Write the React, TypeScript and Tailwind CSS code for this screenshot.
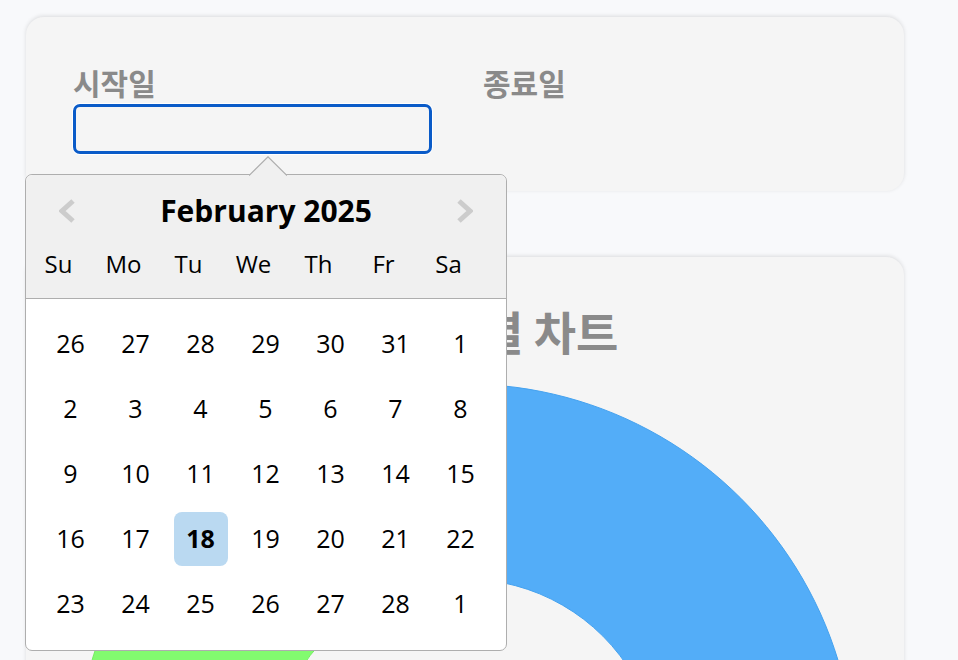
import React from 'react';

const dayNames = ['Su', 'Mo', 'Tu', 'We', 'Th', 'Fr', 'Sa'];

const weeks = [
  [26, 27, 28, 29, 30, 31, 1],
  [2, 3, 4, 5, 6, 7, 8],
  [9, 10, 11, 12, 13, 14, 15],
  [16, 17, 18, 19, 20, 21, 22],
  [23, 24, 25, 26, 27, 28, 1],
];

const slices = [
  { from: -90, to: 150, fill: '#53adf8', stroke: '#45a2ef' },
  { from: 150, to: 240, fill: '#82fb6f', stroke: '#74ee62' },
  { from: 240, to: 270, fill: '#ff7b8f', stroke: '#f26a80' },
];

function arc(cx: number, cy: number, R: number, r: number, a0: number, a1: number) {
  const rad = (d: number) => (d * Math.PI) / 180;
  const p = (rr: number, a: number) => [cx + rr * Math.cos(rad(a)), cy + rr * Math.sin(rad(a))];
  const large = a1 - a0 > 180 ? 1 : 0;
  const [x0, y0] = p(R, a0);
  const [x1, y1] = p(R, a1);
  const [x2, y2] = p(r, a1);
  const [x3, y3] = p(r, a0);
  return `M${x0} ${y0} A${R} ${R} 0 ${large} 1 ${x1} ${y1} L${x2} ${y2} A${r} ${r} 0 ${large} 0 ${x3} ${y3} Z`;
}

function DatePopup() {
  return (
    <div
      className="absolute left-[-48px] top-[110px] z-10 w-[482px] h-[477px] rounded-[7px] border border-[#aeaeae] bg-white"
      style={{ fontFamily: '"Open Sans", "Noto Sans", sans-serif' }}
    >
      {/* triangle */}
      <svg className="absolute left-[223px] top-[-19px]" width="38" height="20" viewBox="0 0 38 20">
        <path d="M0 19.5 L19 0.8 L38 19.5" fill="#f0f0f0" stroke="#aeaeae" strokeWidth="1.2" />
      </svg>
      <div className="bg-[#f0f0f0] border-b border-[#aeaeae] rounded-t-[7px] pt-[18px] pb-[12px]">
        <div className="flex items-center justify-between px-[33px] h-[36px]">
          <svg width="16" height="24" viewBox="0 0 16 24">
            <polyline points="14,2 3,12 14,22" fill="none" stroke="#cccccc" strokeWidth="5" />
          </svg>
          <div className="text-[30px] font-bold text-black leading-[36px]">February 2025</div>
          <svg width="16" height="24" viewBox="0 0 16 24">
            <polyline points="2,2 13,12 2,22" fill="none" stroke="#cccccc" strokeWidth="5" />
          </svg>
        </div>
        <div className="flex mt-[13px] h-[44px] items-center">
          {dayNames.map((d) => (
            <div key={d} className="w-[65px] text-center text-[24px] text-black">
              {d}
            </div>
          ))}
        </div>
      </div>
      <div className="pt-[12px] pl-[12px]">
        {weeks.map((w, i) => (
          <div key={i} className="flex h-[65px]">
            {w.map((n, j) => {
              const sel = i === 3 && j === 2;
              return (
                <div key={j} className="w-[65px] flex items-center justify-center">
                  <div
                    className={`w-[54px] h-[54px] flex items-center justify-center rounded-[8px] text-[25px] text-black ${
                      sel ? 'bg-[#bad9f1] font-bold' : ''
                    }`}
                  >
                    {n}
                  </div>
                </div>
              );
            })}
          </div>
        ))}
      </div>
    </div>
  );
}

export default function App() {
  const korean = { fontFamily: '"Noto Sans CJK KR", "Noto Sans", sans-serif' };
  return (
    <div className="h-[660px] overflow-hidden bg-[#f8f9fb] pl-[26px] pt-[17px]">
      <div className="relative w-[878px] h-[174px] rounded-[18px] bg-[#f5f5f5] shadow-[0_-1px_4px_rgba(0,0,0,0.12)] px-[47px] pt-[47px]">
        <div className="flex gap-[51px]">
          <div className="relative w-[359px]">
            <div className="text-[30px] font-bold text-[#8a8a8a] leading-[36px]" style={korean}>
              시작일
            </div>
            <div className="mt-[4px] h-[50px] rounded-[7px] border-[3px] border-[#0a5bc8] bg-[#f5f5f5] ring-1 ring-white" />
            <DatePopup />
          </div>
          <div className="w-[359px]">
            <div className="text-[30px] font-bold text-[#8a8a8a] leading-[36px]" style={korean}>
              종료일
            </div>
          </div>
        </div>
      </div>
      <div className="mt-[66px] w-[878px] h-[900px] rounded-[18px] bg-[#f5f5f5] shadow-[0_-1px_4px_rgba(0,0,0,0.12)] px-[47px] pt-[48px]">
        <div className="text-center text-[46px] font-bold text-[#8a8a8a] leading-[50px]" style={korean}>
          카테고리별 차트
        </div>
        <svg className="mt-[27px]" width="784" height="784" viewBox="0 0 784 784">
          {slices.map((s, i) => (
            <path key={i} d={arc(392, 392, 390, 195, s.from, s.to)} fill={s.fill} stroke={s.stroke} strokeWidth="1" />
          ))}
        </svg>
      </div>
    </div>
  );
}
